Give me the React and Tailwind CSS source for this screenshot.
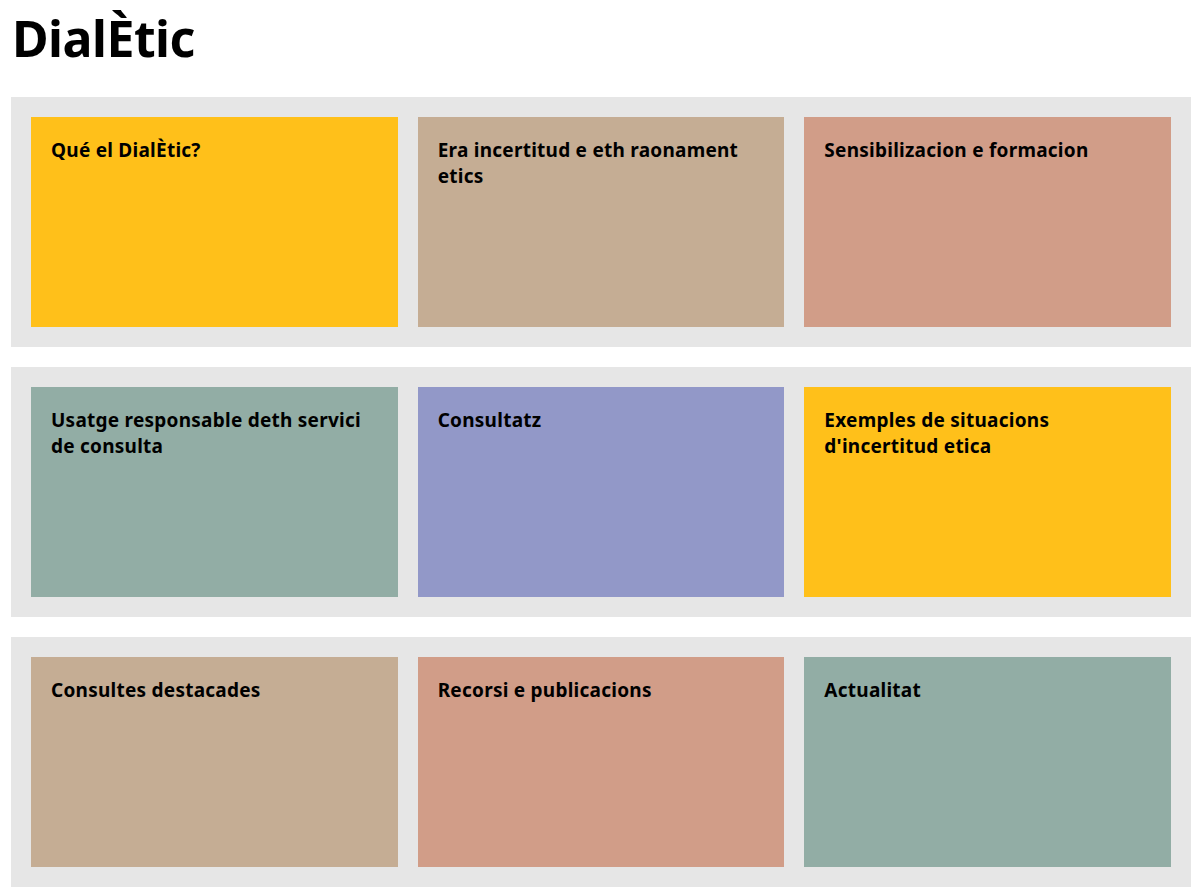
export default function App() {
  const rows = [
    [
      { t: "Qué el DialÈtic?", c: "bg-[#ffc01a]" },
      { t: "Era incertitud e eth raonament etics", c: "bg-[#c5ad94]" },
      { t: "Sensibilizacion e formacion", c: "bg-[#d19d88]" },
    ],
    [
      { t: "Usatge responsable deth servici de consulta", c: "bg-[#92ada5]" },
      { t: "Consultatz", c: "bg-[#9298c8]" },
      { t: "Exemples de situacions d'incertitud etica", c: "bg-[#ffc01a]" },
    ],
    [
      { t: "Consultes destacades", c: "bg-[#c5ad94]" },
      { t: "Recorsi e publicacions", c: "bg-[#d19d88]" },
      { t: "Actualitat", c: "bg-[#92ada5]" },
    ],
  ];
  return (
    <div className="pl-[11px] pr-[4px] bg-white text-black" style={{ fontFamily: "'Noto Sans', sans-serif" }}>
      <h1 className="h-[97px] pt-[5px] pl-[1px] text-[50px] font-bold leading-[66px] tracking-[-0.5px]">DialÈtic</h1>
      <div className="flex flex-col gap-5">
        {rows.map((r, i) => (
          <div key={i} className="grid grid-cols-3 gap-5 p-5 bg-[#e6e6e6]">
            {r.map((card) => (
              <div key={card.t} className={`${card.c} h-[210px] pl-5 pt-5 pr-6`}>
                <div className="text-[19px] font-bold leading-[26px] tracking-[0.25px]">{card.t}</div>
              </div>
            ))}
          </div>
        ))}
      </div>
    </div>
  );
}
